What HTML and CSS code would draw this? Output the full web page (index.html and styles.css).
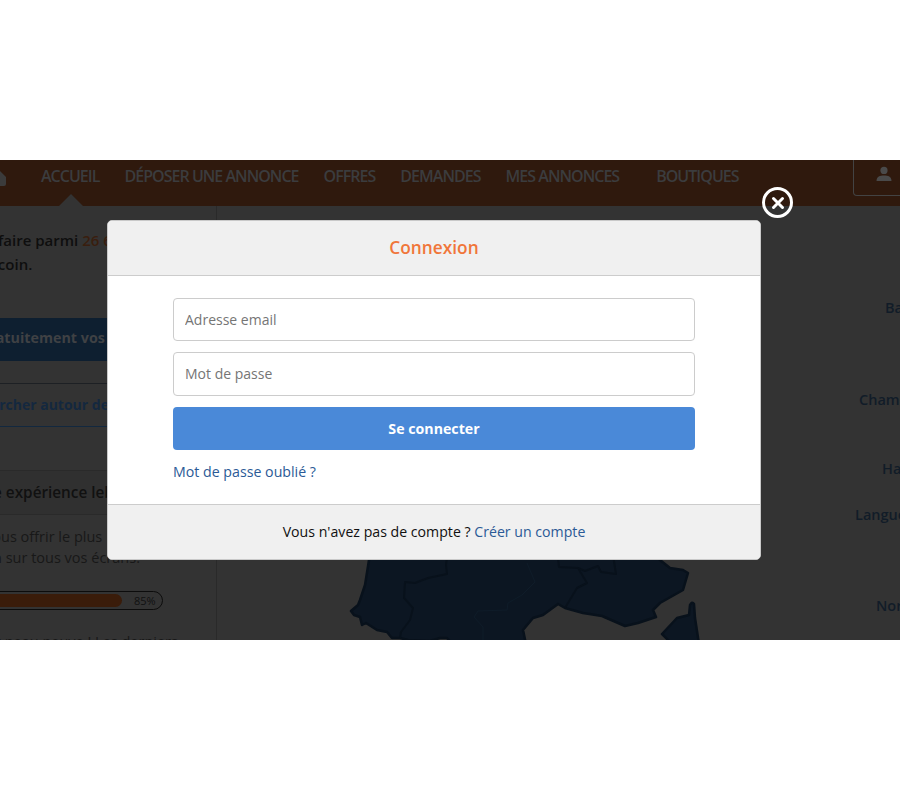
FILE: index.html
```html
<!DOCTYPE html>
<html lang="fr">
<head>
<meta charset="utf-8">
<title>Connexion</title>
<link rel="stylesheet" href="styles.css">
</head>
<body>
<div class="stage">
  <header class="nav">
    <svg class="home" width="7" height="17" viewBox="0 0 7 17"><path d="M-8 8 L-1 0 L6 7 V14 Q6 16 4 16 H-8 Z" fill="#3b3b3b"/></svg>
    <a class="nav-item active">ACCUEIL</a>
    <a class="nav-item">DÉPOSER UNE ANNONCE</a>
    <a class="nav-item">OFFRES</a>
    <a class="nav-item">DEMANDES</a>
    <a class="nav-item">MES ANNONCES</a>
    <a class="nav-item shops">BOUTIQUES</a>
    <div class="account">
      <svg width="16" height="16" viewBox="0 0 16 16"><circle cx="8" cy="4.4" r="3.6" fill="#4a4a4a"/><path d="M0.5 15 C0.5 10.5 4 9.4 8 9.4 C12 9.4 15.5 10.5 15.5 15 Z" fill="#4a4a4a"/></svg>
    </div>
  </header>
  <div class="page">
    <aside class="side">
      <div class="intro">
        <p class="clip-a">Faites votre affaire parmi <span class="count">26 600 annonces</span></p>
        <p class="clip-b">sur le bon coin.</p>
      </div>
      <div class="cta">Déposez gratuitement vos annonces</div>
      <div class="around">Rechercher autour de moi</div>
      <div class="exp-title">Une expérience lebon</div>
      <div class="exp-text">
        <p class="clip-c">Pour vous offrir le plus</p>
        <p class="clip-d">n sur tous vos écrans.</p>
      </div>
      <div class="progress"><div class="progress-fill"></div><span class="progress-label">85%</span></div>
      <p class="exp-more">Le site fait peau neuve ! Les derniers</p>
    </aside>
    <main class="map">
      <svg class="france" width="683" height="434" viewBox="217 206 683 434">
        <path class="land" d="M370 540 L369 560 L365 585 L360 600 L358 605 L351 611 L354 615 L360 617 L362 625 L366 623 L377 630 L387 632 L392 638 L400 638 L408 640 L430 641 L440 638 L447 638 L452 644 L526 644 L523 630 L533 618 L543 615 L558 604 L565 608 L583 613 L602 616 L625 626 L638 623 L656 617 L653 610 L660 603 L683 590 L688 573 L683 570 L670 568 L660 560 L640 540 Z"/>
        <path class="land" d="M662 634 L677 618 L689 615 L690 605 Q692 601 694 604 L695 618 L699 644 L672 644 Z"/>
        <path class="border" d="M448 550 L446 565 L447 574 L428 578 L415 583 L405 582 L404 598 L413 608 L410 620 L401 632 L400 638"/>
        <path class="border" d="M557 550 L559 567 L578 568 L587 583 L577 588 L565 608"/>
        <path class="border" d="M578 568 L585 571 L598 566 L601 572 L616 574 L613 555"/>
        <path class="faint" d="M527 563 L535 582 L522 595 L508 603 L507 610 L478 611 L474 617 L483 627 L483 640"/>
      </svg>
      <span class="region r1">Basse-Normandie</span>
      <span class="region r2">Champagne</span>
      <span class="region r3">Haute-Normandie</span>
      <span class="region r4">Languedoc</span>
      <span class="region r5">Nord</span>
    </main>
  </div>
  <div class="modal">
    <div class="modal-head">Connexion</div>
    <form class="modal-body">
      <input class="field" type="text" placeholder="Adresse email">
      <input class="field tall" type="password" placeholder="Mot de passe">
      <button class="submit" type="button">Se connecter</button>
      <a class="link forgot">Mot de passe oublié ?</a>
    </form>
    <div class="modal-foot">Vous n'avez pas de compte ? <a class="link">Créer un compte</a></div>
  </div>
  <button class="close" type="button" aria-label="Fermer">
    <svg width="14" height="14" viewBox="0 0 14 14"><path d="M2.5 2.5 L11.5 11.5 M11.5 2.5 L2.5 11.5" stroke="#fff" stroke-width="3" stroke-linecap="round"/></svg>
  </button>
</div>
</body>
</html>
```
FILE: styles.css
```css
* { box-sizing: border-box; }
html, body { margin: 0; background: #fff; }
body { padding-top: 160px; height: 800px; font-family: "Open Sans", sans-serif; font-size: 14px; color: #161616; }
p { margin: 0; }

.stage { position: relative; height: 480px; overflow: hidden; background: #333; display: flex; flex-direction: column; }

.nav { height: 46px; flex: none; background: #2f190d; display: flex; align-items: flex-start; position: relative; }
.home { margin-top: 10px; flex: none; width: 7px; }
.nav-item { margin-left: 25px; line-height: 33px; font-weight: 600; font-size: 16px; letter-spacing: -0.97px; color: #3b3c3e; white-space: nowrap; position: relative; }
.nav-item:nth-child(2) { margin-left: 34px; }
.nav-item.shops { margin-left: 37px; }
.active::after { content: ""; position: absolute; left: 18px; top: 34px; border: 12px solid transparent; border-top: 0; border-bottom-color: #333; }
.account { position: absolute; left: 853px; top: 0; width: 80px; height: 36px; border: 1px solid #434343; border-top: 0; border-radius: 0 0 4px 4px; padding: 6px 0 0 22px; }

.page { flex: 1; display: flex; min-height: 0; }
.side { width: 217px; flex: none; border-right: 1px solid #2a2a2a; overflow: hidden; font-size: 14px; }
.intro { padding-top: 22px; font-weight: 600; color: #0e0e0e; line-height: 24px; white-space: nowrap; height: 112px; font-size: 15px; }
.clip-a { margin-left: -105px; }
.clip-b { margin-left: -78px; }
.count { color: #3a1e0e; }
.cta { height: 43px; background: #0e1f30; color: #3f4144; font-weight: 700; font-size: 14.3px; line-height: 40px; white-space: nowrap; margin-left: -82px; }
.around { height: 44px; margin-top: 22px; margin-left: -5px; border-top: 1px solid #1d2024; border-bottom: 1px solid #12283f; color: #14283f; font-weight: 700; line-height: 42px; white-space: nowrap; text-indent: -38px; }
.exp-title { height: 45px; margin-top: 43px; background: #303030; border-top: 1px solid #2a2a2a; border-bottom: 1px solid #2a2a2a; font-weight: 600; font-size: 15.3px; color: #111; line-height: 42px; white-space: nowrap; margin-left: -28px; }
.exp-text { padding-top: 11px; line-height: 21px; white-space: nowrap; height: 76px; color: #181818; font-size: 14.5px; }
.clip-c { margin-left: -51px; }
.clip-d { margin-left: -7px; }
.progress { position: relative; height: 19px; width: 173px; margin-left: -10px; border: 1px solid #0c0c0c; border-radius: 10px; padding: 2px; }
.progress-fill { width: 129px; height: 13px; background: #3a1c0a; border-radius: 7px; }
.progress-label { position: absolute; left: 143px; top: 1px; font-size: 11px; line-height: 16px; color: #111; }
.exp-more { margin-top: 22px; margin-left: -68px; white-space: nowrap; color: #181818; font-size: 14.5px; }

.map { position: relative; flex: 1; overflow: hidden; }
.france { display: block; }
.land { fill: #0c1622; stroke: #08111b; stroke-width: 2.5; stroke-linejoin: round; }
.border { fill: none; stroke: #08111b; stroke-width: 2; stroke-linejoin: round; }
.faint { fill: none; stroke: #0f1c29; stroke-width: 1; }
.region { position: absolute; font-weight: 600; font-size: 14.5px; line-height: 20px; color: #111c28; white-space: nowrap; }
.r1 { left: 668px; top: 92px; }
.r2 { left: 642px; top: 184px; }
.r3 { left: 665px; top: 253px; }
.r4 { left: 638px; top: 299px; }
.r5 { left: 659px; top: 390px; }

.modal { position: absolute; left: 107px; top: 60px; width: 654px; height: 340px; background: #fff; border: 1px solid #c9c9c9; border-radius: 5px; overflow: hidden; display: flex; flex-direction: column; }
.modal-head { height: 55px; flex: none; background: #f0f0f0; border-bottom: 1px solid #ccc; text-align: center; color: #f0763a; font-weight: 600; font-size: 17.3px; line-height: 54px; }
.modal-body { flex: 1; padding: 22px 65px 0; display: flex; flex-direction: column; align-items: stretch; }
.field { height: 43px; border: 1px solid #ccc; border-radius: 4px; padding: 0 11px; font: 14px "Open Sans", sans-serif; color: #333; background: #fff; margin-bottom: 11px; outline: 0; }
.field.tall { height: 44px; padding-bottom: 2px; }
.field::placeholder { color: #757575; opacity: 1; }
.submit { height: 43px; border: 0; border-radius: 4px; background: #4a89d8; color: #fff; font: 700 14.2px "Open Sans", sans-serif; }
.link { color: #2b5a96; }
.forgot { margin-top: 12px; line-height: 20px; font-size: 14.2px; }
.modal-foot { height: 55px; flex: none; background: #f0f0f0; border-top: 1px solid #ccc; text-align: center; line-height: 54px; color: #111; font-size: 14.15px; }

.close { position: absolute; left: 762px; top: 27px; width: 31px; height: 31px; padding: 0; border: 3px solid #fff; border-radius: 50%; background: transparent; display: flex; align-items: center; justify-content: center; }
```
